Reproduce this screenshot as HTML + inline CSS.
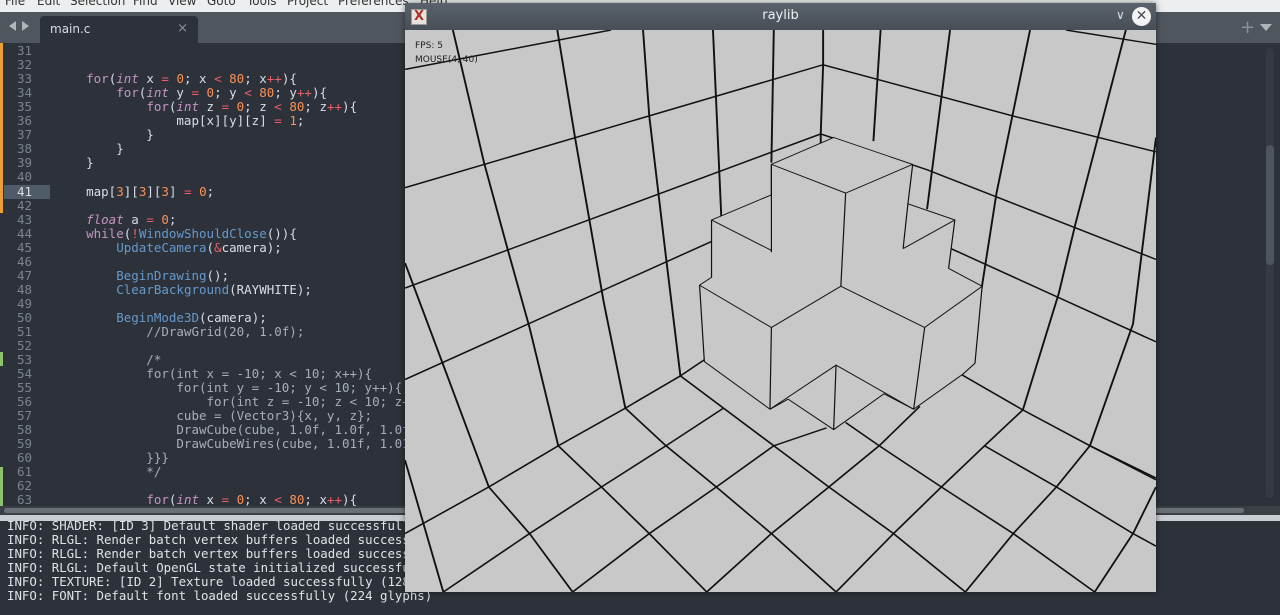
<!DOCTYPE html>
<html><head><meta charset="utf-8"><style>
*{margin:0;padding:0;box-sizing:border-box}
body{width:1280px;height:615px;overflow:hidden;background:#2d323a;position:relative;font-family:"DejaVu Sans Mono","Liberation Mono",monospace}
.menu{position:absolute;left:0;top:0;width:1280px;height:12px;background:#eceeef;overflow:hidden}
.menu span{position:absolute;top:-6px;font:12px "DejaVu Sans","Liberation Sans",sans-serif;color:#333}
.tabbar{position:absolute;left:0;top:12px;width:1280px;height:31px;background:#50565d}
.tab{position:absolute;left:40px;top:4px;width:158px;height:27px;background:#2d323a;border-radius:4px 4px 0 0}
.tab span{position:absolute;left:10px;top:6px;font:12px "DejaVu Sans",sans-serif;color:#d8dee9}
.tab b{position:absolute;right:10px;top:5px;font:13px "DejaVu Sans",sans-serif;color:#8a9199;font-weight:normal}
.code{position:absolute;left:0;top:44px;width:405px;height:462px;overflow:hidden;font-size:12.5px;line-height:14px;color:#d8dee9}
.ln{position:absolute;left:0;width:32px;text-align:right;color:#7c838c}
.tx{position:absolute;left:56px;white-space:pre}
.k{color:#c594c5}.i{color:#c594c5;font-style:italic}.n{color:#f99157}.o{color:#ec5f67}.f{color:#6699cc}.c{color:#a7adba}
.hl{position:absolute;left:4px;width:46px;height:14px;background:#4f5b66}
.con{position:absolute;left:0;top:521px;width:1280px;height:94px;background:#2d323a;font-size:12.4px;line-height:14px;color:#dfe3e8;white-space:pre;overflow:hidden}
.win{position:absolute;left:405px;top:3px;width:751px;height:589px;background:#c8c8c8;box-shadow:0 0 6px rgba(0,0,0,.5);overflow:hidden}
.tb{position:absolute;left:0;top:0;width:751px;height:27px;background:linear-gradient(#5a626c,#474e57)}
</style></head><body>
<div class="menu">
<span style="left:5px">File</span><span style="left:37px">Edit</span><span style="left:70px">Selection</span><span style="left:133px">Find</span><span style="left:168px">View</span><span style="left:207px">Goto</span><span style="left:247px">Tools</span><span style="left:287px">Project</span><span style="left:338px">Preferences</span><span style="left:420px">Help</span>
</div>
<div class="tabbar">
<div style="position:absolute;left:9px;top:9px;width:0;height:0;border-top:5px solid transparent;border-bottom:5px solid transparent;border-right:7px solid #b0b5bb"></div>
<div style="position:absolute;left:22px;top:9px;width:0;height:0;border-top:5px solid transparent;border-bottom:5px solid transparent;border-left:7px solid #b0b5bb"></div>
<div class="tab"><span>main.c</span><b>×</b></div>
<div style="position:absolute;left:1240px;top:5px;color:#8a9199;font:18px 'DejaVu Sans',sans-serif">+</div>
<div style="position:absolute;left:1260px;top:12px;width:0;height:0;border-left:6px solid transparent;border-right:6px solid transparent;border-top:7px solid #b0b5bb"></div>
</div>
<div style="position:absolute;left:0;top:43px;width:3px;height:170px;background:#f0a030"></div>
<div style="position:absolute;left:0;top:352px;width:3px;height:14px;background:#8bc36a"></div>
<div style="position:absolute;left:0;top:467px;width:3px;height:39px;background:#8bc36a"></div>
<div class="code">
<div class="hl" style="top:141px"></div>
<div class="ln" style="top:0">31</div><div class="ln" style="top:14px">32</div><div class="ln" style="top:28px">33</div><div class="ln" style="top:42px">34</div><div class="ln" style="top:56px">35</div><div class="ln" style="top:70px">36</div><div class="ln" style="top:84px">37</div><div class="ln" style="top:98px">38</div><div class="ln" style="top:112px">39</div><div class="ln" style="top:126px">40</div><div class="ln" style="top:141px;color:#d8dee9">41</div><div class="ln" style="top:155px">42</div><div class="ln" style="top:169px">43</div><div class="ln" style="top:183px">44</div><div class="ln" style="top:197px">45</div><div class="ln" style="top:211px">46</div><div class="ln" style="top:225px">47</div><div class="ln" style="top:239px">48</div><div class="ln" style="top:253px">49</div><div class="ln" style="top:267px">50</div><div class="ln" style="top:281px">51</div><div class="ln" style="top:295px">52</div><div class="ln" style="top:309px">53</div><div class="ln" style="top:323px">54</div><div class="ln" style="top:337px">55</div><div class="ln" style="top:351px">56</div><div class="ln" style="top:365px">57</div><div class="ln" style="top:379px">58</div><div class="ln" style="top:393px">59</div><div class="ln" style="top:407px">60</div><div class="ln" style="top:421px">61</div><div class="ln" style="top:435px">62</div><div class="ln" style="top:449px">63</div>
<div class="tx" style="top:28px">    <span class="k">for</span>(<span class="i">int</span> x <span class="o">=</span> <span class="n">0</span>; x <span class="o">&lt;</span> <span class="n">80</span>; x<span class="o">++</span>){</div>
<div class="tx" style="top:42px">        <span class="k">for</span>(<span class="i">int</span> y <span class="o">=</span> <span class="n">0</span>; y <span class="o">&lt;</span> <span class="n">80</span>; y<span class="o">++</span>){</div>
<div class="tx" style="top:56px">            <span class="k">for</span>(<span class="i">int</span> z <span class="o">=</span> <span class="n">0</span>; z <span class="o">&lt;</span> <span class="n">80</span>; z<span class="o">++</span>){</div>
<div class="tx" style="top:70px">                map[x][y][z] <span class="o">=</span> <span class="n">1</span>;</div>
<div class="tx" style="top:84px">            }</div>
<div class="tx" style="top:98px">        }</div>
<div class="tx" style="top:112px">    }</div>
<div class="tx" style="top:141px">    map[<span class="n">3</span>][<span class="n">3</span>][<span class="n">3</span>] <span class="o">=</span> <span class="n">0</span>;</div>
<div class="tx" style="top:169px">    <span class="i">float</span> a <span class="o">=</span> <span class="n">0</span>;</div>
<div class="tx" style="top:183px">    <span class="k">while</span>(<span class="o">!</span><span class="f">WindowShouldClose</span>()){</div>
<div class="tx" style="top:197px">        <span class="f">UpdateCamera</span>(<span class="o">&amp;</span>camera);</div>
<div class="tx" style="top:225px">        <span class="f">BeginDrawing</span>();</div>
<div class="tx" style="top:239px">        <span class="f">ClearBackground</span>(RAYWHITE);</div>
<div class="tx" style="top:267px">        <span class="f">BeginMode3D</span>(camera);</div>
<div class="tx c" style="top:281px">            //DrawGrid(20, 1.0f);</div>
<div class="tx c" style="top:309px">            /*</div>
<div class="tx c" style="top:323px">            for(int x = -10; x &lt; 10; x++){</div>
<div class="tx c" style="top:337px">                for(int y = -10; y &lt; 10; y++){</div>
<div class="tx c" style="top:351px">                    for(int z = -10; z &lt; 10; z++){</div>
<div class="tx c" style="top:365px">                cube = (Vector3){x, y, z};</div>
<div class="tx c" style="top:379px">                DrawCube(cube, 1.0f, 1.0f, 1.0f, RED);</div>
<div class="tx c" style="top:393px">                DrawCubeWires(cube, 1.01f, 1.01f, 1.01f);</div>
<div class="tx c" style="top:407px">            }}}</div>
<div class="tx c" style="top:421px">            */</div>
<div class="tx" style="top:449px">            <span class="k">for</span>(<span class="i">int</span> x <span class="o">=</span> <span class="n">0</span>; x <span class="o">&lt;</span> <span class="n">80</span>; x<span class="o">++</span>){</div>
</div>
<div style="position:absolute;left:0;top:506px;width:1280px;height:9px;background:#3a3f46"></div>
<div style="position:absolute;left:4px;top:508px;width:1240px;height:5px;background:#6a7077;border-radius:3px"></div>
<div style="position:absolute;left:0;top:515px;width:1280px;height:6px;background:#c9ccd0"></div>
<div style="position:absolute;left:1266px;top:48px;width:8px;height:450px;background:#353a42;border-radius:4px"></div>
<div style="position:absolute;left:1266px;top:145px;width:8px;height:120px;background:#4f555c;border-radius:4px"></div>
<div class="con"><div style="position:relative;top:-2px;left:7px">INFO: SHADER: [ID 3] Default shader loaded successfully
INFO: RLGL: Render batch vertex buffers loaded successfully
INFO: RLGL: Render batch vertex buffers loaded successfully
INFO: RLGL: Default OpenGL state initialized successfully
INFO: TEXTURE: [ID 2] Texture loaded successfully (128x128)
INFO: FONT: Default font loaded successfully (224 glyphs)</div></div>
<div class="win">
<div class="tb">
<div style="position:absolute;left:6px;top:6px;width:16px;height:16px;background:#e8e2dc;border:1px solid #999;color:#b03030;font:bold 13px 'DejaVu Sans',sans-serif;line-height:14px;text-align:center">X</div>
<div style="position:absolute;left:0;width:751px;top:5px;text-align:center;color:#eef0f2;font:13px 'DejaVu Sans','Liberation Sans',sans-serif">raylib</div>
<div style="position:absolute;left:711px;top:5px;color:#dde;font:12px 'DejaVu Sans',sans-serif">∨</div>
<div style="position:absolute;left:727px;top:4px;width:19px;height:19px;border-radius:50%;background:#f4f4f4;color:#4a5058;font:14px 'DejaVu Sans',sans-serif;text-align:center;line-height:19px">✕</div>
</div>
<svg style="position:absolute;left:0;top:27px" width="751" height="562" viewBox="0 0 1568 1568" preserveAspectRatio="none">
<g fill="none" stroke="#111" stroke-width="4" stroke-linejoin="round">
<polyline points="0,110 430,0"/><polyline points="0,440 873,97"/><polyline points="0,720 868,290"/><polyline points="0,975 640,590 870,450"/>
<polyline points="873,0 873,97 868,290 868,450"/>
<polyline points="100,0 165,370 215,615 260,830 320,1160"/>
<polyline points="318,0 355,300 385,530 415,760 460,1055"/>
<polyline points="497,0 510,240 545,635 575,965"/>
<polyline points="643,0 660,510 665,700"/><polyline points="770,0 765,370"/>
<polyline points="0,650 80,935 175,1275"/>
<polyline points="870,700 575,965 460,1055 320,1160 175,1275 0,1405"/>
<polyline points="1380,0 1568,40"/><polyline points="873,97 1270,240 1568,340"/>
<polyline points="868,290 1090,390 1568,640"/><polyline points="1000,530 1140,610 1568,870"/>
<polyline points="993,0 978,310"/><polyline points="1138,0 1090,500"/>
<polyline points="1305,0 1235,455 1190,840 1165,960"/>
<polyline points="1505,0 1400,540 1365,735 1290,1060"/>
<polyline points="1568,300 1520,820 1430,1160"/>
<polyline points="1000,860 1160,960 1290,1060 1430,1160 1568,1255"/>
<polyline points="320,1160 410,1275 510,1405 630,1568"/>
<polyline points="460,1055 545,1160 650,1275 765,1405 900,1568"/>
<polyline points="575,965 665,1055 770,1160 885,1275 1020,1405 1170,1568"/>
<polyline points="175,1275 260,1405 350,1568"/><polyline points="0,1200 80,1568"/>
<polyline points="920,1095 990,1160 1120,1275 1270,1405 1440,1568"/>
<polyline points="1210,1160 1360,1275 1520,1405 1568,1440"/><polyline points="1430,1160 1568,1250"/>
<polyline points="1290,1060 1210,1160 1120,1275 1020,1405 900,1568"/>
<polyline points="1430,1160 1360,1275 1270,1405 1170,1568"/>
<polyline points="1075,1050 990,1160 885,1275 765,1405 630,1568"/>
<polyline points="1568,1275 1520,1405 1440,1568"/>
<polyline points="880,1110 770,1160 650,1275 510,1405 350,1568"/>
<polyline points="665,1055 545,1160 410,1275 260,1405 80,1568"/>
</g>
<polygon fill="#c8c8c8" points="615,712 640,690 640,530 765,460 765,375 895,300 1060,375 1050,485 1148,530 1135,665 1205,715 1190,930 1165,960 1062,1058 1000,1015 895,1115 800,1030 762,1058 625,925"/>
<g fill="none" stroke="#111" stroke-width="2.5" stroke-linejoin="round">
<polygon points="615,712 640,690 640,530 765,460 765,375 895,300 1060,375 1050,485 1148,530 1135,665 1205,715 1190,930 1165,960 1062,1058 1000,1015 895,1115 800,1030 762,1058 625,925"/>
<polyline points="765,375 920,455 1060,375"/><polyline points="920,455 910,715"/><polyline points="765,375 765,620"/>
<polyline points="640,530 765,615"/><polyline points="1148,530 1040,610"/><polyline points="1050,485 1040,610"/>
<polyline points="615,712 765,830 910,715 1085,830 1205,715"/>
<polyline points="765,830 762,1058"/><polyline points="1085,830 1062,1058"/>
<polyline points="762,1058 900,935 1062,1058"/><polyline points="900,935 895,1115"/>
</g>
</svg>
<div style="position:absolute;left:10px;top:36px;font:9px 'DejaVu Sans',sans-serif;color:#222;line-height:14px">FPS: 5<br>MOUSE(4, 40)</div>
</div>
</body></html>
